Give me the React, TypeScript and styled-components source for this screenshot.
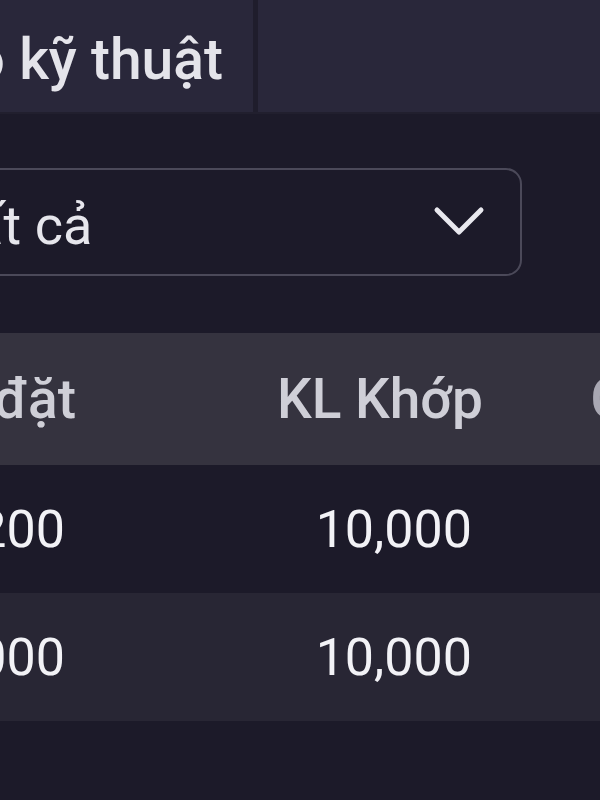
import React from 'react';
import styled, { createGlobalStyle } from 'styled-components';

const GlobalStyle = createGlobalStyle`
	html, body {
		margin: 0;
		padding: 0;
		background: #1c1a29;
	}
	body {
		font-family: Roboto, 'Noto Sans', 'Liberation Sans', sans-serif;
		color: #e8e8ee;
	}
`;

const Page = styled.div`
	width: 600px;
	height: 800px;
	overflow: hidden;
	background: #1c1a29;
	display: flex;
	flex-direction: column;
`;

const TabBar = styled.div`
	display: grid;
	grid-template-columns: 258px 1fr;
	height: 112px;
	background: #29273a;
	border-bottom: 2px solid #211f2e;
	flex-shrink: 0;
`;

const Tab = styled.div<{ $divider?: boolean }>`
	display: flex;
	align-items: center;
	justify-content: flex-end;
	padding: 6px 30px 0 0;
	white-space: nowrap;
	font-size: 57px;
	font-weight: 500;
	color: #e4e4ea;
	border-right: ${({ $divider }) => ($divider ? '5px solid #1f1d2c' : 'none')};
`;

const Filter = styled.div`
	padding: 54px 0 0;
	flex-shrink: 0;
`;

const Select = styled.div`
	display: flex;
	align-items: center;
	justify-content: space-between;
	box-sizing: border-box;
	height: 108px;
	width: 622px;
	margin-left: -100px;
	padding: 6px 33px 0 43px;
	border: 2px solid #4b4959;
	border-radius: 16px;
	background: #1c1a29;
	font-size: 54px;
	color: #e6e6ec;
	white-space: nowrap;
`;

const Chevron = styled.svg`
	width: 56px;
	height: 36px;
	flex-shrink: 0;
	margin-top: -6px;
`;

const Table = styled.div`
	margin-top: 57px;
	margin-left: -350px;
	display: grid;
	grid-template-columns: 434px 407px 324px;
	width: 1165px;
`;

const HeadCell = styled.div<{ $muted?: boolean }>`
	height: 132px;
	display: flex;
	align-items: center;
	justify-content: flex-end;
	padding-right: 8px;
	background: #35333f;
	font-size: 55px;
	font-weight: 500;
	color: ${({ $muted }) => ($muted ? '#a9a8b3' : '#cfcfd7')};
	white-space: nowrap;
`;

const Cell = styled.div<{ $odd: boolean }>`
	height: 128px;
	display: flex;
	align-items: center;
	justify-content: flex-end;
	padding-right: 19px;
	background: ${({ $odd }) => ($odd ? '#282634' : '#1c1a29')};
	font-size: 52px;
	color: #f2f2f6;
	white-space: nowrap;
`;

const columns = ['Giá đặt', 'KL Khớp', 'Giá khớp'];

const rows = [
	['23,200', '10,000', '23,200'],
	['23,000', '10,000', '23,000'],
];

function App() {
	return (
		<Page>
			<GlobalStyle />
			<TabBar>
				<Tab $divider>Biểu đồ kỹ thuật</Tab>
				<Tab />
			</TabBar>
			<Filter>
				<Select>
					<span>Tất cả</span>
					<Chevron viewBox="0 0 56 36">
						<polyline
							points="6,6 28,28 50,6"
							fill="none"
							stroke="#e8e8ee"
							strokeWidth="5"
							strokeLinecap="round"
							strokeLinejoin="round"
						/>
					</Chevron>
				</Select>
			</Filter>
			<Table>
				{columns.map((c, i) => (
					<HeadCell key={c} $muted={i === 2}>
						{c}
					</HeadCell>
				))}
				{rows.map((r, i) =>
					r.map((v, j) => (
						<Cell key={`${i}-${j}`} $odd={i % 2 === 1}>
							{v}
						</Cell>
					))
				)}
			</Table>
		</Page>
	);
}

export default App;
